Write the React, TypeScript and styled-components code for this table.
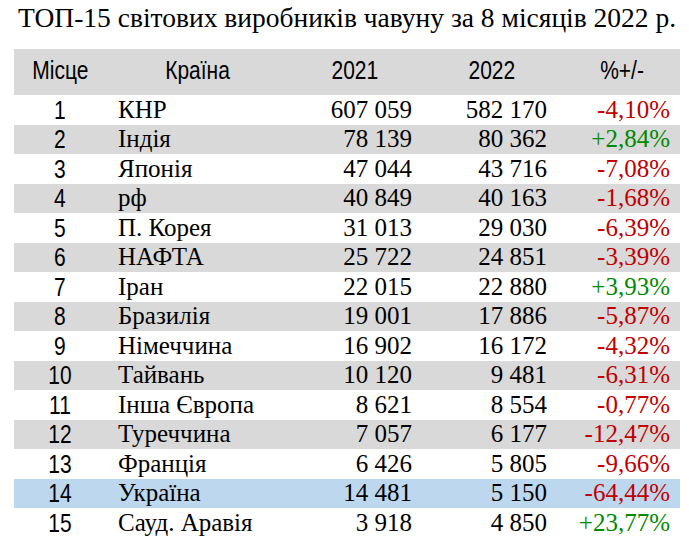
import React from "react";
import styled, { createGlobalStyle } from "styled-components";

const GlobalStyle = createGlobalStyle`
  body {
    margin: 0;
    background: #ffffff;
  }
`;

const Page = styled.div`
  width: 689px;
  height: 546px;
  padding: 0 9px 0 14px;
  box-sizing: border-box;
`;

const Title = styled.h1`
  margin: 0;
  padding: 2px 0 0 4px;
  height: 49px;
  box-sizing: border-box;
  font-family: "Liberation Serif", "Times New Roman", serif;
  font-weight: normal;
  font-size: 27.5px;
  line-height: 32px;
  color: #000;
  white-space: nowrap;
`;

const Table = styled.table`
  width: 666px;
  border-collapse: collapse;
  table-layout: fixed;
`;

const HeadCell = styled.th`
  box-sizing: border-box;
  height: 46px;
  padding: 0 0 4px 0;
  background: #d9d9d9;
  font-weight: normal;
  text-align: center;
  color: #000;
`;

const Narrow = styled.span`
  display: inline-block;
  font-family: "Liberation Sans Narrow", "Arial Narrow", "Liberation Sans", sans-serif;
  font-size: 25px;
  line-height: 28px;
  transform: scaleX(0.84);
  transform-origin: center;
`;

const Row = styled.tr<{ $tone: "plain" | "gray" | "blue" }>`
  height: 29.5px;
  background: ${(p) =>
    p.$tone === "gray" ? "#d9d9d9" : p.$tone === "blue" ? "#bdd7ee" : "#ffffff"};
`;

const RankCell = styled.td`
  box-sizing: border-box;
  height: 29.5px;
  padding: 0;
  text-align: center;
  vertical-align: middle;
  color: #000;
`;

const Cell = styled.td<{ $align?: "left" | "right"; $pad?: number; $color?: string }>`
  box-sizing: border-box;
  height: 29.5px;
  padding: 0;
  padding-left: ${(p) => (p.$align === "left" ? `${p.$pad ?? 0}px` : "0")};
  padding-right: ${(p) => (p.$align === "right" ? `${p.$pad ?? 0}px` : "0")};
  text-align: ${(p) => p.$align ?? "left"};
  vertical-align: middle;
  font-family: "Liberation Serif", "Times New Roman", serif;
  font-size: 25px;
  line-height: 28px;
  white-space: nowrap;
  color: ${(p) => p.$color ?? "#000"};
`;

type Item = [string, string, string, string];

const rows: Item[] = [
  ["КНР", "607 059", "582 170", "-4,10%"],
  ["Індія", "78 139", "80 362", "+2,84%"],
  ["Японія", "47 044", "43 716", "-7,08%"],
  ["рф", "40 849", "40 163", "-1,68%"],
  ["П. Корея", "31 013", "29 030", "-6,39%"],
  ["НАФТА", "25 722", "24 851", "-3,39%"],
  ["Іран", "22 015", "22 880", "+3,93%"],
  ["Бразилія", "19 001", "17 886", "-5,87%"],
  ["Німеччина", "16 902", "16 172", "-4,32%"],
  ["Тайвань", "10 120", "9 481", "-6,31%"],
  ["Інша Європа", "8 621", "8 554", "-0,77%"],
  ["Туреччина", "7 057", "6 177", "-12,47%"],
  ["Франція", "6 426", "5 805", "-9,66%"],
  ["Україна", "14 481", "5 150", "-64,44%"],
  ["Сауд. Аравія", "3 918", "4 850", "+23,77%"],
];

const App = () => {
  return (
    <Page>
      <GlobalStyle />
      <Title>ТОП-15 світових виробників чавуну за 8 місяців 2022 р.</Title>
      <Table>
        <colgroup>
          <col style={{ width: 92 }} />
          <col style={{ width: 184 }} />
          <col style={{ width: 130 }} />
          <col style={{ width: 144 }} />
          <col style={{ width: 116 }} />
        </colgroup>
        <thead>
          <tr>
            <HeadCell><Narrow>Місце</Narrow></HeadCell>
            <HeadCell><Narrow>Країна</Narrow></HeadCell>
            <HeadCell><Narrow>2021</Narrow></HeadCell>
            <HeadCell><Narrow>2022</Narrow></HeadCell>
            <HeadCell><Narrow>%+/-</Narrow></HeadCell>
          </tr>
        </thead>
        <tbody>
          {rows.map(([country, y21, y22, pct], i) => {
            const place = i + 1;
            const tone = place === 14 ? "blue" : place % 2 === 0 ? "gray" : "plain";
            return (
              <Row key={country} $tone={tone}>
                <RankCell>
                  <Narrow>{place}</Narrow>
                </RankCell>
                <Cell $align="left" $pad={12}>
                  {country}
                </Cell>
                <Cell $align="right" $pad={8}>
                  {y21}
                </Cell>
                <Cell $align="right" $pad={17}>
                  {y22}
                </Cell>
                <Cell
                  $align="right"
                  $pad={10}
                  $color={pct.startsWith("+") ? "#008a00" : "#c00000"}
                >
                  {pct}
                </Cell>
              </Row>
            );
          })}
        </tbody>
      </Table>
    </Page>
  );
};

export default App;
